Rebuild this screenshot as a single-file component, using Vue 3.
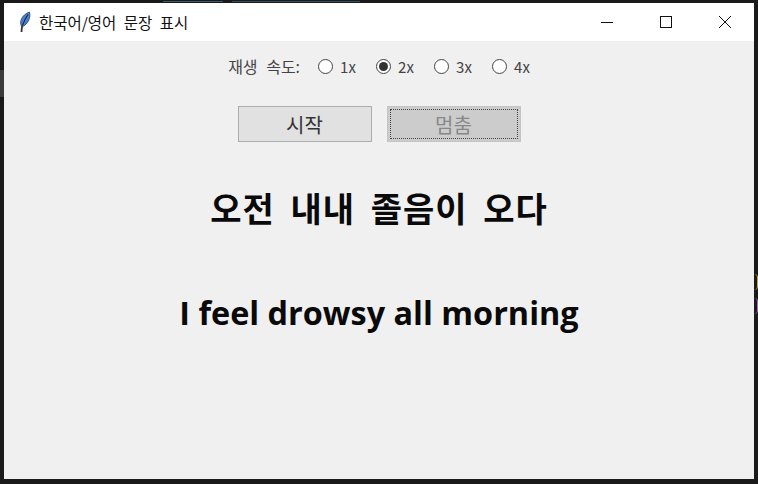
<script setup>
import { ref } from 'vue'

const speeds = [1, 2, 3, 4]
const speed = ref(2)
</script>

<template>
  <div class="desktop">
    <!-- bits of the editor behind the window -->
    <span class="scrap left-bar"></span>
    <span class="scrap arc-yellow"></span>
    <span class="scrap arc-purple"></span>
    <span class="scrap top-code"></span>
    <span class="scrap top-code second"></span>

    <div class="window">
      <header class="titlebar">
        <svg class="feather" width="16" height="22" viewBox="0 0 16 22">
          <path d="M4.5 21 C4.6 18 5 16 5.5 13" fill="none" stroke="#333" stroke-width="1.8" />
          <path d="M5 16 C1.5 11 5 3.5 12.5 1 C14 7 11 13 5 16 Z" fill="#4a80d0" stroke="#2a3a55" stroke-width="0.8" />
          <path d="M5.5 14.5 C7 10 8.5 7 11 3.5" fill="none" stroke="#14233f" stroke-width="1.1" />
        </svg>
        <span class="title">한국어/영어 문장 표시</span>
        <div class="controls">
          <span class="control">
            <svg width="12" height="12" viewBox="0 0 12 12"><path d="M0 6.5H12" stroke="#111" fill="none" /></svg>
          </span>
          <span class="control">
            <svg width="12" height="12" viewBox="0 0 12 12"><rect x="0.5" y="0.5" width="11" height="11" stroke="#111" fill="none" /></svg>
          </span>
          <span class="control">
            <svg width="12" height="12" viewBox="0 0 12 12"><path d="M0 0L12 12M12 0L0 12" stroke="#111" fill="none" /></svg>
          </span>
        </div>
      </header>

      <main class="content">
        <div class="speed-row">
          <span class="speed-label">재생 속도:</span>
          <label v-for="s in speeds" :key="s" class="radio" @click="speed = s">
            <span class="dot" :class="{ on: speed === s }"></span>
            <span>{{ s }}x</span>
          </label>
        </div>

        <div class="buttons">
          <button class="btn">시작</button>
          <button class="btn disabled"><span class="focus">멈춤</span></button>
        </div>

        <h1 class="korean">오전 내내 졸음이 오다</h1>
        <h2 class="english">I feel drowsy all morning</h2>
      </main>
    </div>
  </div>
</template>

<style>
html, body {
  margin: 0;
  background: #1a1a1a;
}
</style>

<style scoped>
.desktop {
  position: relative;
  width: 758px;
  height: 484px;
  box-sizing: border-box;
  padding: 3px 4px 5px 4px;
  background: #1a1a1a;
  overflow: hidden;
}

.scrap {
  position: absolute;
}

.left-bar {
  left: 0;
  top: 70px;
  width: 4px;
  height: 27px;
  background: #3a3a3a;
}

.arc-yellow {
  left: 754px;
  top: 274px;
  width: 3px;
  height: 16px;
  border-right: 1px solid #c9a227;
  border-radius: 0 8px 8px 0;
}

.arc-purple {
  left: 754px;
  top: 298px;
  width: 3px;
  height: 16px;
  border-right: 1px solid #b060c0;
  border-radius: 0 8px 8px 0;
}

.top-code {
  left: 163px;
  top: 1px;
  width: 60px;
  height: 1px;
  background: #3d5a6b;
}

.top-code.second {
  left: 232px;
  width: 128px;
  background: #35505f;
}

.window {
  position: relative;
  height: 100%;
  display: flex;
  flex-direction: column;
  background: #f0f0f0;
  font-family: "Noto Sans CJK KR", "Noto Sans", sans-serif;
}

.titlebar {
  height: 38px;
  flex-shrink: 0;
  display: flex;
  align-items: center;
  background: #fff;
  padding-left: 13px;
}

.feather {
  margin-right: 6px;
}

.title {
  font-size: 15.5px;
  word-spacing: 4px;
  color: #111;
}

.controls {
  margin-left: auto;
  display: flex;
}

.control {
  width: 59px;
  height: 38px;
  display: flex;
  align-items: center;
  justify-content: center;
}

.content {
  flex: 1;
  display: flex;
  flex-direction: column;
  align-items: center;
}

.speed-row {
  height: 20px;
  margin-top: 15px;
  display: flex;
  align-items: center;
  font-size: 15px;
  color: #444;
}

.speed-label {
  font-size: 16px;
  word-spacing: 5px;
  margin-right: 18px;
}

.radio {
  display: flex;
  align-items: center;
  gap: 7px;
  width: 58px;
}

.radio:last-child {
  width: auto;
}

.dot {
  width: 15px;
  height: 15px;
  box-sizing: border-box;
  border: 1px solid #444;
  border-radius: 50%;
  background: #fff;
  display: flex;
  align-items: center;
  justify-content: center;
}

.dot.on::after {
  content: "";
  width: 9px;
  height: 9px;
  border-radius: 50%;
  background: #333;
}

.buttons {
  display: flex;
  gap: 15px;
  margin-top: 30px;
}

.btn {
  width: 134px;
  height: 36px;
  padding: 0;
  box-sizing: border-box;
  border: 1px solid #adadad;
  background: #e1e1e1;
  font-family: inherit;
  font-size: 20px;
  color: #333;
}

.btn.disabled {
  background: #ccc;
  border-color: #c4c4c4;
  color: #888;
  padding: 2px;
}

.focus {
  display: flex;
  height: 100%;
  align-items: center;
  justify-content: center;
  border: 1px dotted #444;
  box-sizing: border-box;
}

.korean,
.english {
  margin: 0;
  font-weight: 700;
  color: #0a0a0a;
  line-height: 46px;
}

.korean {
  margin-top: 43px;
  font-size: 34px;
  letter-spacing: 1px;
  word-spacing: 7px;
}

.english {
  margin-top: 58px;
  font-size: 32.4px;
  font-family: "Open Sans", sans-serif;
}
</style>
